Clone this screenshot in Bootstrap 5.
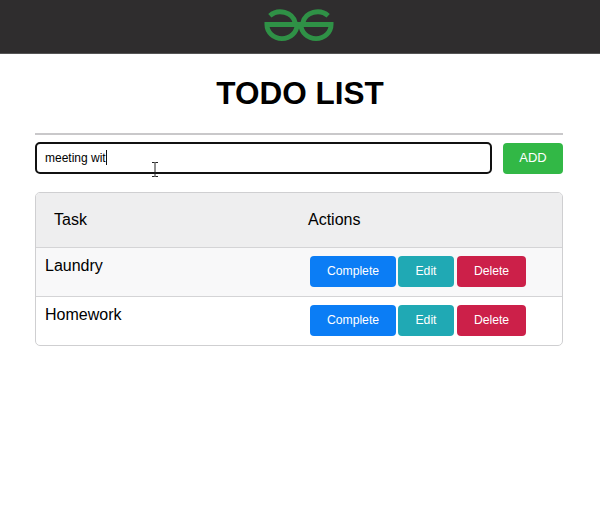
<!DOCTYPE html>
<html lang="en">
<head>
    <meta charset="UTF-8">
    <title>TODO LIST</title>
    <link href="https://cdn.jsdelivr.net/npm/bootstrap@5.3.2/dist/css/bootstrap.min.css" rel="stylesheet">
    <style>
        body { font-family: "Liberation Sans", Arial, sans-serif; color: #000; background: #fff; overflow: hidden; }
        .top-bar { height: 54px; background: #2f2d2e; border-bottom: 1px solid #555; }
        .gfg-logo { margin: 6px 2px 0 0; }
        .page-wrap { position: relative; padding: 0 37px 0 35px; }
        .page-title { font-size: 31.5px; font-weight: 700; line-height: 38px; text-align: center; margin: 20px 0 21px; padding-left: 2px; }
        .title-rule { height: 2px; background: #c9c8ca; margin-bottom: 7px; }
        .task-input { height: 32px; border: 2px solid #111; border-radius: 5px; padding: 0 8px; font-size: 12px; line-height: 28px; flex: 1; }
        .task-caret { display: inline-block; width: 1px; height: 15px; background: #111; vertical-align: -3px; }
        .add-btn { width: 60px; height: 31px; margin-left: 11px; background: #32b846; border: 0; border-radius: 4px; color: #fff; font-size: 13px; }
        .task-box { margin-top: 18px; border: 1px solid #cfcfd1; border-radius: 5px; overflow: hidden; }
        .task-head { height: 55px; background: #eeeeef; border-bottom: 1px solid #d4d4d6; font-size: 16px; }
        .task-row { height: 49px; font-size: 16px; padding-top: 8px; }
        .task-row + .task-row { border-top: 1px solid #d4d4d6; }
        .task-row.shaded { height: 48px; background: #f8f8f9; }
        .name-head { width: 272px; padding-left: 18px; }
        .name-cell { width: 274px; padding-left: 9px; line-height: 20px; }
        .act-btn { height: 31px; border: 0; border-radius: 4px; color: #fff; font-size: 12.2px; padding: 0; }
        .act-complete { width: 86px; background: #0b7df5; margin-right: 2px; }
        .act-edit { width: 56px; background: #20a9b4; margin-right: 3px; }
        .act-delete { width: 69px; background: #cc2049; }
        .ibeam { position: absolute; left: 151px; top: 88px; }
    </style>
</head>
<body>
<div class="top-bar d-flex justify-content-center">
    <svg class="gfg-logo" width="70" height="35" viewBox="0 0 72 36" fill="none" stroke="#2f9146" stroke-width="5">
        <path d="M6 10A15.500 14 0 0 1 32 17"/>
        <path d="M66 10A15.500 14 0 0 0 40 17"/>
        <path d="M3 19H34A15.500 14.500 0 0 1 3 19Z"/>
        <path d="M69 19H38A15.500 14.500 0 0 0 69 19Z"/>
    </svg>
</div>
<div class="page-wrap">
    <h1 class="page-title">TODO LIST</h1>
    <div class="title-rule"></div>
    <div class="d-flex align-items-center">
        <div class="task-input">meeting wit<span class="task-caret"></span></div>
        <button type="button" class="add-btn">ADD</button>
    </div>
    <div class="task-box">
        <div class="task-head d-flex align-items-center">
            <div class="name-head">Task</div>
            <div>Actions</div>
        </div>
        <div class="task-row shaded d-flex">
            <div class="name-cell">Laundry</div>
            <div class="d-flex">
                <button type="button" class="act-btn act-complete">Complete</button>
                <button type="button" class="act-btn act-edit">Edit</button>
                <button type="button" class="act-btn act-delete">Delete</button>
            </div>
        </div>
        <div class="task-row d-flex">
            <div class="name-cell">Homework</div>
            <div class="d-flex">
                <button type="button" class="act-btn act-complete">Complete</button>
                <button type="button" class="act-btn act-edit">Edit</button>
                <button type="button" class="act-btn act-delete">Delete</button>
            </div>
        </div>
    </div>
    <svg class="ibeam" width="8" height="15" viewBox="0 0 8 15" fill="none" stroke="#222" stroke-width="1">
        <path d="M1 .5H3.500L4 1L4.500 .5H7M4 1V14M1 14.500H3.500L4 14L4.500 14.500H7"/>
    </svg>
</div>
<script src="https://cdn.jsdelivr.net/npm/bootstrap@5.3.2/dist/js/bootstrap.bundle.min.js"></script>
</body>
</html>
